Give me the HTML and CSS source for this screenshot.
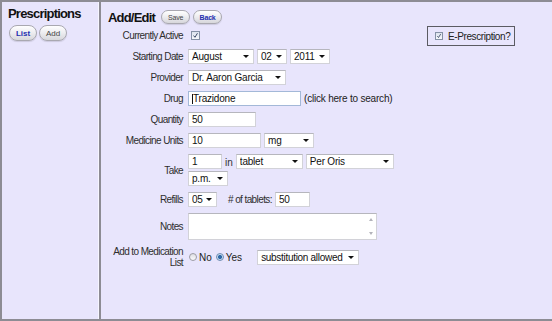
FILE: index.html
```html
<!DOCTYPE html>
<html lang="en">
<head>
    <meta charset="UTF-8">
    <title>Prescriptions - Add/Edit</title>
    <link rel="stylesheet" href="styles.css">
</head>
<body>
    <div class="frame">
        <aside class="sidebar">
            <h2>Prescriptions</h2>
            <div class="nav">
                <button class="pill blue">List</button>
                <button class="pill">Add</button>
            </div>
        </aside>

        <main class="main">
            <div class="title">
                <h2>Add/Edit</h2>
                <button class="pill small">Save</button>
                <button class="pill small blue">Back</button>
            </div>

            <div class="body">
                <form class="form">
                    <span class="label">Currently Active</span>
                    <div class="ctrl">
                        <span class="check first"><svg viewBox="0 0 9 9"><path d="M2 4.6 L3.8 6.8 L7 1.6" /></svg></span>
                    </div>

                    <span class="label">Starting Date</span>
                    <div class="ctrl">
                        <span class="sel month"><select><option>August</option></select></span>
                        <span class="sel day"><select><option>02</option></select></span>
                        <span class="sel year"><select><option>2011</option></select></span>
                    </div>

                    <span class="label">Provider</span>
                    <div class="ctrl">
                        <span class="sel provider"><select><option>Dr. Aaron Garcia</option></select></span>
                    </div>

                    <span class="label">Drug</span>
                    <div class="ctrl">
                        <span class="field drug"><i class="caret"></i>Trazidone</span>
                        <span class="search">(click here to search)</span>
                    </div>

                    <span class="label">Quantity</span>
                    <div class="ctrl">
                        <input class="field qty" type="text" value="50">
                    </div>

                    <span class="label">Medicine Units</span>
                    <div class="ctrl">
                        <input class="field units" type="text" value="10">
                        <span class="sel unit"><select><option>mg</option></select></span>
                    </div>

                    <span class="label">Take</span>
                    <div class="take">
                        <div class="ctrl">
                            <input class="field dose" type="text" value="1">
                            <span class="in">in</span>
                            <span class="sel form-type"><select><option>tablet</option></select></span>
                            <span class="sel route"><select><option>Per Oris</option></select></span>
                        </div>
                        <div class="ctrl">
                            <span class="sel freq"><select><option>p.m.</option></select></span>
                        </div>
                    </div>

                    <span class="label">Refills</span>
                    <div class="ctrl">
                        <span class="sel refills"><select><option>05</option></select></span>
                        <span class="label tablets">#&nbsp;of tablets:</span>
                        <input class="field count" type="text" value="50">
                    </div>

                    <span class="label">Notes</span>
                    <div class="notes">
                        <textarea></textarea>
                        <div class="scroll"><i class="up"></i><i class="down"></i></div>
                    </div>

                    <span class="label two">Add to Medication<br>List</span>
                    <div class="ctrl">
                        <span class="radio first"></span><span class="opt">No</span>
                        <span class="radio on"></span><span class="opt">Yes</span>
                        <span class="sel subst"><select><option>substitution allowed</option></select></span>
                    </div>
                </form>

                <label class="eprx">
                    <span class="check"><svg viewBox="0 0 9 9"><path d="M2 4.6 L3.8 6.8 L7 1.6" /></svg></span>
                    E-Prescription?
                </label>
            </div>
        </main>
    </div>
</body>
</html>
```

FILE: styles.css
```css
* {
    box-sizing: border-box;
}

body {
    margin: 0;
    font-family: "Liberation Sans", Arial, sans-serif;
    background-color: #e8e5fc;
    color: #222;
}

.frame {
    display: flex;
    height: 321px;
    border-top: 2px solid #8d8c94;
    border-left: 2px solid #8d8c94;
    border-bottom: 2px solid #8d8c94;
}

/* Left column */
.sidebar {
    width: 97px;
    padding: 4px 0 0 6px;
    border-right: 1px solid #f6f5ff;
}

.sidebar h2, .title h2 {
    margin: 0;
    font-size: 13px;
    line-height: 16px;
    letter-spacing: -0.8px;
    color: #111;
}

.nav {
    display: flex;
    gap: 2px;
    margin: 3px 0 0 1px;
}

.pill {
    width: 28px;
    height: 16px;
    padding: 0;
    font-family: inherit;
    font-size: 8px;
    color: #444;
    border: 1px solid #a9a8b0;
    border-radius: 8px;
    background: linear-gradient(#ffffff, #ececef 50%, #d7d7db);
    box-shadow: 0 1px 1px rgba(0, 0, 0, 0.12);
}

.pill.blue {
    color: #2430b0;
    font-weight: bold;
}

.pill.small {
    width: 29px;
    height: 14px;
    font-size: 7px;
    letter-spacing: -0.2px;
}

/* Main column */
.main {
    flex: 1;
    padding-top: 8px;
    border-left: 2px solid #8d8c94;
}

.title {
    display: flex;
    align-items: flex-start;
    padding-left: 7px;
    gap: 3px;
}

.title h2 {
    margin-right: 3px;
}

.body {
    display: flex;
    margin-top: 2px;
}

.form {
    display: grid;
    grid-template-columns: 82px auto;
    column-gap: 5px;
    row-gap: 6px;
    align-items: center;
    align-content: start;
}

.label {
    text-align: right;
    font-size: 10px;
    letter-spacing: -0.6px;
    color: #2e2e2e;
}

.label.two {
    line-height: 11px;
}

.ctrl {
    display: flex;
    align-items: center;
    gap: 3px;
    min-height: 15px;
}

.check {
    display: inline-block;
    width: 9px;
    height: 9px;
    border: 1px solid #8591a6;
    background: linear-gradient(#dde3ee, #f6f8fc);
}

.check.first {
    margin-left: 3px;
}

.check svg {
    display: block;
    width: 7px;
    height: 7px;
}

.check path {
    fill: none;
    stroke: #2f3d5c;
    stroke-width: 1.2;
}

/* Text fields and selects */
.field, .sel select {
    height: 15px;
    padding: 0 3px;
    font-family: "Liberation Sans", Arial, sans-serif;
    font-size: 10px;
    letter-spacing: -0.2px;
    color: #111;
    background: #fff;
    border: 1px solid #d2d2d8;
    border-top-color: #b6b6bd;
    border-radius: 0;
    outline: none;
}

.field.drug {
    display: flex;
    align-items: center;
    width: 113px;
    border-color: #a3b8d8;
}

.caret {
    width: 1px;
    height: 10px;
    background: #111;
}

.search {
    font-size: 10px;
    letter-spacing: -0.2px;
    color: #222;
}

.sel {
    position: relative;
    display: inline-block;
}

.sel select {
    display: block;
    width: 100%;
    appearance: none;
    -webkit-appearance: none;
}

.sel::after {
    content: "";
    position: absolute;
    right: 5px;
    top: 6px;
    border-left: 3px solid transparent;
    border-right: 3px solid transparent;
    border-top: 3px solid #111;
}

.month { width: 66px; }
.day { width: 30px; }
.year { width: 40px; }
.provider { width: 98px; }
.qty { width: 68px; }
.units { width: 73px; }
.unit { width: 50px; }
.dose { width: 34px; }
.form-type { width: 67px; }
.route { width: 88px; }
.freq { width: 40px; }
.refills { width: 29px; }
.count { width: 35px; }
.subst { width: 102px; margin-left: 11px; }

.subst select {
    letter-spacing: -0.3px;
}

.in {
    font-size: 10px;
    color: #333;
    padding-top: 2px;
}

.take {
    display: flex;
    flex-direction: column;
    gap: 2px;
}

.tablets {
    margin-left: 8px;
}

/* Notes */
.notes {
    display: flex;
    width: 189px;
    height: 27px;
    background: #fff;
    border: 1px solid #d2d2d8;
    border-top-color: #b6b6bd;
}

.notes textarea {
    flex: 1;
    border: none;
    resize: none;
    outline: none;
}

.scroll {
    display: flex;
    flex-direction: column;
    justify-content: space-between;
    align-items: center;
    width: 10px;
    padding: 4px 0;
}

.scroll .up {
    border-left: 2.5px solid transparent;
    border-right: 2.5px solid transparent;
    border-bottom: 3px solid #b3b3bb;
}

.scroll .down {
    border-left: 2.5px solid transparent;
    border-right: 2.5px solid transparent;
    border-top: 3px solid #b3b3bb;
}

/* Radios */
.radio {
    width: 8px;
    height: 8px;
    border-radius: 50%;
    border: 1px solid #9c9ca4;
    background: linear-gradient(#dedee3, #fbfbfd);
}

.radio.first {
    margin-left: 1px;
}

.radio.on {
    border-color: #6f8db3;
    background: radial-gradient(circle, #2f6aa8 0, #2f6aa8 1.6px, #c9dcf0 2.4px);
}

.opt {
    font-size: 10px;
    color: #222;
    margin-left: -1px;
    margin-right: 1px;
}

/* E-Prescription box */
.eprx {
    display: flex;
    align-items: center;
    gap: 5px;
    width: 88px;
    height: 20px;
    margin: -2px 37px 0 auto;
    padding: 0 0 0 7px;
    border: 1px solid #5b5b62;
    font-size: 10px;
    letter-spacing: -0.4px;
    color: #222;
}

.eprx .check {
    width: 8px;
    height: 8px;
}

.eprx .check svg {
    width: 6px;
    height: 6px;
}
```
